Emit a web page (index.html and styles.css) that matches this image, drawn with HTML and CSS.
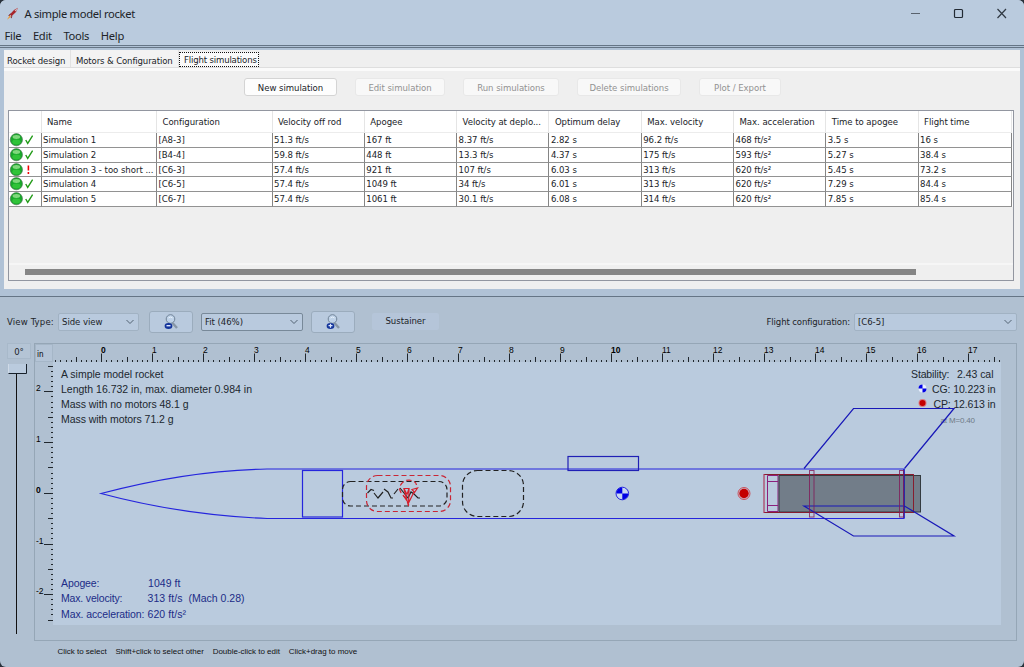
FILE: index.html
```
<!DOCTYPE html>
<html lang="en">
<head>
<meta charset="utf-8">
<title>A simple model rocket</title>
<link rel="stylesheet" href="styles.css">
</head>
<body>
<div class="window">
  <header class="titlebar">
    <svg class="app-icon" width="14" height="14" viewBox="0 0 14 14"><path d="M13 .8 9 3 4.800 7.500 6.500 9.300 11 5Z" fill="#a8262b"/><path d="M13 .8 9.500 3.500 11 4.500Z" fill="#d8b8bc"/><path d="M6 6 3.200 8.500 4.500 9.300ZM7.500 8.500 6.500 11.500 5.500 10Z" fill="#7b2230"/><path d="M4.800 8.200 2 12.800 6 9.800Z" fill="#ef9a32"/></svg>
    <span class="window-title">A simple model rocket</span>
    <svg class="window-buttons" width="104" height="14" viewBox="0 0 104 14"><path d="M1 6.500h9" stroke="#59626d"/><rect x="44.500" y="2.500" width="8" height="8" rx="1" fill="none" stroke="#222a33" stroke-width="1.200"/><path d="m87.500 2 8.500 9m0-9-8.500 9" stroke="#303943" stroke-width="1.200"/></svg>
  </header>
  <nav class="menubar"><span>File</span><span>Edit</span><span>Tools</span><span>Help</span></nav>
  <section class="upper">
    <div class="tabs"><span class="tab tab-design">Rocket design</span><span class="tab tab-motors">Motors &amp; Configuration</span><span class="tab tab-flight">Flight simulations</span></div>
    <div class="simulations">
      <div class="actions">
        <button class="btn new">New simulation</button><button class="btn edit" disabled>Edit simulation</button><button class="btn run" disabled>Run simulations</button><button class="btn delete" disabled>Delete simulations</button><button class="btn plot" disabled>Plot / Export</button>
      </div>
      <div class="table-pane">
        <div class="row head"><span></span><span>Name</span><span>Configuration</span><span>Velocity off rod</span><span>Apogee</span><span>Velocity at deplo...</span><span>Optimum delay</span><span>Max. velocity</span><span>Max. acceleration</span><span>Time to apogee</span><span>Flight time</span></div>
        <div id="rows"></div>
        <div class="filler"></div>
        <div class="scrollbar"><div class="thumb"></div></div>
      </div>
    </div>
  </section>
  <section class="lower">
    <div class="toolbar">
      <label class="view-label">View Type:</label>
      <div class="combo view">Side view<svg width="8" height="6"><path d="m.5 1 3.500 3.500L7.500 1"/></svg></div>
      <div class="zoom-btn"><svg width="16" height="16" viewBox="0 0 16 16"><path d="m9.500 9 4.500 5" stroke="#8796a6" stroke-width="2.400"/><circle cx="7.500" cy="5" r="4.300" fill="#bfd2e8" stroke="#718498"/><path d="M5.500 4q2-2 4 0" stroke="#e6f0fa" fill="none"/><ellipse cx="5.500" cy="12" rx="3.900" ry="3" fill="#13349b"/><path d="M3.500 11.700h4" stroke="#dce7ff" stroke-width="1.400"/></svg></div>
      <div class="combo scale">Fit (46%)<svg width="8" height="6"><path d="m.5 1 3.500 3.500L7.500 1"/></svg></div>
      <div class="zoom-btn"><svg width="16" height="16" viewBox="0 0 16 16"><path d="m9.500 9 4.500 5" stroke="#8796a6" stroke-width="2.400"/><circle cx="7.500" cy="5" r="4.300" fill="#bfd2e8" stroke="#718498"/><path d="M5.500 4q2-2 4 0" stroke="#e6f0fa" fill="none"/><ellipse cx="5.500" cy="12" rx="3.900" ry="3" fill="#13349b"/><path d="M3.500 11.700h4M5.500 9.800v4" stroke="#dce7ff" stroke-width="1.200"/></svg></div>
      <div class="stage">Sustainer</div>
      <label class="config-label">Flight configuration:</label>
      <div class="combo config">[C6-5]<svg width="8" height="6"><path d="m.5 1 3.500 3.500L7.500 1"/></svg></div>
    </div>
    <div class="workspace">
      <div class="rotation"><span class="angle">0°</span><svg width="22" height="275" viewBox="0 0 22 275"><path d="M9.500 10v261" stroke="#111" /><path d="M1.500 1v9h18V1" fill="#bacbde"/><path d="M1.500 10.500h18V1" fill="none" stroke="#17202a"/><path d="M1.500 10V1" stroke="#cfdae7"/></svg></div>
      <svg class="drawing" width="984" height="299" viewBox="34 343 984 299">
        <rect x="34.500" y="343.500" width="982" height="297" fill="#b0c0d1" stroke="#95a6b6"/>
        <rect x="35.500" y="344.500" width="17" height="17" fill="#b4c4d6" stroke="#a5b6c7"/>
        <rect x="53" y="362" width="948" height="263" fill="#bacbde"/>
        <text class="unit" x="37" y="356.500">in</text>
        <g id="ticks" stroke="#20272e"></g>
        <g id="numbers" class="numbers"></g>
        <g class="info">
          <text x="61" y="378" textLength="102.500">A simple model rocket</text>
          <text x="61" y="393" textLength="191">Length 16.732 in, max. diameter 0.984 in</text>
          <text x="61" y="408" textLength="127.500">Mass with no motors 48.1 g</text>
          <text x="61" y="423" textLength="112.500">Mass with motors 71.2 g</text>
          <text x="911" y="378" textLength="38.500">Stability:</text><text x="957" y="378" textLength="36.500">2.43 cal</text>
          <text x="932" y="393" textLength="63.500">CG: 10.223 in</text>
          <text x="933.500" y="407.500" textLength="62">CP: 12.613 in</text>
        </g>
        <text class="mach" x="940.500" y="423" textLength="34.500">at M=0.40</text>
        <g class="flight">
          <text x="61" y="587" textLength="38.500">Apogee:</text><text x="148" y="587" textLength="32.500">1049 ft</text>
          <text x="61" y="602" textLength="61.500">Max. velocity:</text><text x="147.500" y="602" textLength="35">313 ft/s</text><text x="188.500" y="602" textLength="56">(Mach 0.28)</text>
          <text x="61" y="617.500" textLength="83.500">Max. acceleration:</text><text x="147.500" y="617.500" textLength="38.500">620 ft/s²</text>
        </g>
        <circle cx="922.500" cy="388.500" r="3.900" fill="#e9f0ff"/><path d="M922.500 388.500v-4a4 4 0 0 0-4 4zm0 0h4a4 4 0 0 1-4 4z" fill="#0000e4"/>
        <circle cx="922.500" cy="403" r="4" fill="#dc7780"/><circle cx="922.500" cy="403" r="3" fill="#c40000"/>
        <g class="outline">
          <path d="M101 493.500C148 481 205 470 267 469H904V518.500H267C205 516 148 506 101 493.500Z"/>
          <rect x="302.500" y="470.500" width="40" height="46.500"/>
          <rect x="568" y="456.500" width="70.500" height="14" stroke="#2020b5"/>
        </g>
        <g class="hidden-parts">
          <rect x="342.500" y="481.500" width="104.500" height="24.500" rx="8" stroke="#222"/>
          <rect x="462.500" y="470.500" width="61" height="46" rx="15" stroke="#222"/>
          <rect x="366.500" y="475.500" width="84" height="36" rx="11" stroke="#c92635"/>
          <path class="solid" d="m367.500 493 3.500-3.500 3 1M374 493l4 5 5-6M384 489l4 3 3 6h2M394 494l4-5M400 488l8 10 3-6 3 2 4 4h2" stroke="#222"/>
          <path d="M406.500 499c-3-3-7-7-7-11 1-5 5-8 9.500-8q7 1 7.500 5" stroke="#d51f2c"/>
          <path class="solid" d="M404 488.500h5l-2 6zM412 489.500l5.500-1.500-3 4.500zM404 489l4.500 17 .5-17M414 492l-5.500 11-5.500-8" stroke="#d51f2c"/>
        </g>
        <g fill="none" stroke="#a52045"><rect x="764" y="474.500" width="149.500" height="38"/><path d="M767.500 475.500h10.500v36h-10.500zM767.500 481.500H778M767.500 505.500H778" stroke="#8c207c"/></g>
        <rect x="779" y="475.500" width="141.500" height="36.500" fill="#30363b" fill-opacity=".52" stroke="#343b40"/>
        <path d="M913.500 474.500v38M765 474.500H913M765 512.500H913" stroke="#861d2e" fill="none"/>
        <g class="fins"><path d="M804 468.500 853.500 408.500H954L904.500 468.500M804 506H904.500L954 536H853.500ZM904 469v49"/></g>
        <g fill="none" stroke="#821a59" opacity=".8"><rect x="809.500" y="470.500" width="4.500" height="46.500"/><rect x="899.500" y="470.500" width="4" height="46.500"/></g>
        <circle cx="622.300" cy="493.500" r="6.300" fill="#c8d8f0" stroke="#2525dd"/><path d="M622.300 493.500v-6a6 6 0 0 0-6 6zm0 0h6a6 6 0 0 1-6 6z" fill="#0000e4"/>
        <circle cx="744" cy="493.500" r="6" fill="#c8b2c4" stroke="#c7535e"/><circle cx="744" cy="493.500" r="4.700" fill="#c40000"/>
      </svg>
    </div>
    <footer class="hints"><span>Click to select</span><span>Shift+click to select other</span><span>Double-click to edit</span><span>Click+drag to move</span></footer>
  </section>
</div>
<script src="main.js"></script>
</body>
</html>
```
FILE: styles.css
```
* { box-sizing: border-box; }
body { margin: 0; background: #29313b; font: 9.5px "DejaVu Sans Condensed", "DejaVu Sans", sans-serif; letter-spacing: -.04px; color: #202328; }
.window { width: 1024px; height: 667px; display: flex; flex-direction: column; overflow: hidden; background: #b0c0d1; border-radius: 6px; }
.titlebar { height: 28px; display: flex; align-items: center; padding-left: 5px; background: #bacbde; font: 11.2px/26px "Noto Sans", sans-serif; }
.window-title { margin: -1px 0 0 5.500px; letter-spacing: -.3px; }
.window-buttons { margin-left: auto; margin-right: 10px; fill: none; }
.menubar { height: 17px; display: flex; padding-left: 4.500px; background: #bacbde; font: 11.2px/16px "Noto Sans", sans-serif; letter-spacing: -.28px; gap: 11.600px; }
.upper { height: 252px; padding: 2px 4px 7px; background: #b0c2d6; border-top: 3px double #657586; border-bottom: 1px solid #657586; display: flex; flex-direction: column; }
.tabs { height: 18px; display: flex; align-items: flex-start; background: #efefef; border-bottom: 1px solid #dedede; }
.tab { height: 17px; line-height: 21px; white-space: nowrap; background: #f3f3f3; border-right: 1px solid #e2e2e2; padding-left: 3px; letter-spacing: -.1px; }
.tab-design { width: 67px; }
.tab-motors { width: 108px; padding-left: 5px; letter-spacing: -.12px; }
.tab-flight { width: 80px; height: 15px; margin-top: 2px; line-height: 13px; padding-left: 4px; border: 1px dotted #111; background: #fafafa; letter-spacing: -.16px; }
.simulations { flex: 1; background: #efefef; border-top: 3px solid #fafafa; padding: 7px 6px 8px 4px; display: flex; flex-direction: column; }
.actions { display: flex; height: 18px; margin: 0 0 14px 236px; }
.btn { padding: 0; height: 18px; border: 1px solid #d4d4d4; border-radius: 3px; background: #fdfdfd; font: inherit; letter-spacing: -.04px; color: #202328; }
.btn:disabled { color: #929292; background: #f8f8f8; border-color: #e8e8e8; }
.new { width: 93px; } .edit { width: 90px; margin-left: 18px; } .run { width: 96px; margin-left: 18px; } .delete { width: 104px; margin-left: 18px; } .plot { width: 82px; margin-left: 18px; }
.table-pane { flex: 1; border: 1px solid #9296a0; display: flex; flex-direction: column; }
.row { display: grid; grid-template-columns: 32.500px 115.500px 115.500px 92.300px 92.300px 92.300px 92.300px 92.300px 92.300px 92.300px 93.700px; height: 14.75px; line-height: 14px; background: #fff; overflow: hidden; }
.row > span { border-right: 1px solid #858585; border-bottom: 1px solid #929292; padding-left: 1.500px; white-space: nowrap; overflow: hidden; }
.head { height: 22px; line-height: 22px; }
.head > span { border-right-color: #e5e5e5; border-bottom-color: #ececec; padding-left: 5.500px; }
.row > .status { padding: 0; display: flex; }
.filler { flex: 1; }
.scrollbar { height: 17px; border-top: 2px solid #f6f6f6; padding: 4px 0 0 16px; }
.thumb { width: 891px; height: 6px; background: #858585; }
.lower { flex: 1; display: flex; flex-direction: column; padding: 13px 7px 5px; min-height: 0; }
.toolbar { height: 24px; display: flex; align-items: center; }
.view-label { width: 51px; white-space: nowrap; letter-spacing: .15px; }
.combo { height: 18px; display: flex; align-items: center; justify-content: space-between; padding: 0 4px 0 3px; border: 1px solid #a1b2c3; background: #b9cade; white-space: nowrap; border-radius: 2px; }
.combo svg { fill: none; stroke: #536373; }
.view { width: 81px; margin-right: 10px; }
.scale { width: 102px; border-color: #788999; margin: 0 8px; }
.zoom-btn { width: 44px; height: 22px; display: grid; place-items: center; border: 1px solid #9bacbd; border-radius: 3px; background: #b9cade; }
.stage { width: 67px; height: 17px; margin-left: 17px; line-height: 16px; text-align: center; border-radius: 2px; background: #b5c5d9; }
.config-label { margin-left: auto; margin-right: 4px; letter-spacing: -.13px; }
.config { width: 163px; }
.workspace { height: 299px; margin-top: 10px; display: flex; }
.rotation { width: 27px; flex: none; }
.angle { display: block; width: 24px; height: 16px; border: 1px solid #a8b9ca; background: #b4c4d5; text-align: center; line-height: 15px; margin-bottom: 4px; }
.drawing { font-family: "Liberation Sans", sans-serif; letter-spacing: 0; flex: none; }
.unit { font: 8px "DejaVu Sans Condensed", sans-serif; }
.numbers { font-size: 8.500px; }
.bold { font-weight: bold; }
.info { font-size: 10.500px; fill: #20272e; }
.flight { font-size: 10.500px; fill: #202b87; }
.mach { font-size: 8px; fill: #6f7a85; }
.outline { fill: none; stroke: #2525dd; stroke-width: 1.200; }
.fins { fill: none; stroke: #1818b8; stroke-width: 1.200; }
.hidden-parts { fill: none; stroke-dasharray: 5 3; stroke-width: 1.200; }
.solid { stroke-dasharray: none; }
.hints { display: flex; gap: 8.800px; padding-left: 50.500px; font: 7.980px/20px "Liberation Sans", sans-serif; letter-spacing: 0; color: #111; }
```
FILE: main.js
```
const sims = [
  ["Simulation 1", "[A8-3]", "51.3 ft/s", "167 ft", "8.37 ft/s", "2.82 s", "96.2 ft/s", "468 ft/s²", "3.5 s", "16 s"],
  ["Simulation 2", "[B4-4]", "59.8 ft/s", "448 ft", "13.3 ft/s", "4.37 s", "175 ft/s", "593 ft/s²", "5.27 s", "38.4 s"],
  ["Simulation 3 - too short ...", "[C6-3]", "57.4 ft/s", "921 ft", "107 ft/s", "6.03 s", "313 ft/s", "620 ft/s²", "5.45 s", "73.2 s"],
  ["Simulation 4", "[C6-5]", "57.4 ft/s", "1049 ft", "34 ft/s", "6.01 s", "313 ft/s", "620 ft/s²", "7.29 s", "84.4 s"],
  ["Simulation 5", "[C6-7]", "57.4 ft/s", "1061 ft", "30.1 ft/s", "6.08 s", "314 ft/s", "620 ft/s²", "7.85 s", "85.4 s"]
];
document.getElementById("rows").innerHTML = sims.map((sim, i) => {
  const mark = i === 2
    ? '<path d="M19.700 2.500v5M19.700 9v2" stroke="#f00000" stroke-width="1.600"/>'
    : '<path d="m17 7 2 3.500L24 2.500" fill="none" stroke="#239b18" stroke-width="1.400"/>';
  const ball = '<circle cx="7.500" cy="6.700" r="6.200" fill="#19a82b" stroke="#416747" stroke-width=".6"/><ellipse cx="7.500" cy="4" rx="3.800" ry="2" fill="#7fd87c"/><ellipse cx="7.500" cy="9" rx="4.200" ry="2.500" fill="#30c338"/>';
  return '<div class="row"><span class="status"><svg width="32" height="14" viewBox="0 0 32 14">' + ball + mark + '</svg></span>' + sim.map(v => '<span>' + v + '</span>').join("") + '</div>';
}).join("");

let ticks = "", numbers = "";
for (let i = -9; i <= 176; i++) {
  const x = Math.round(101.2 + i * 5.1) + .5;
  const top = i % 10 === 0 ? 353.5 : i % 5 === 0 ? 357 : 360;
  ticks += `<path d="M${x} ${top}V362"/>`;
  if (i % 10 === 0) numbers += `<text x="${x - .5}" y="353" class="${i % 100 === 0 ? "bold" : ""}">${i / 10}</text>`;
}
for (let i = -25; i <= 25; i++) {
  const y = Math.round(492.8 - i * 5.07) + .5;
  const left = i % 10 === 0 ? 44 : i % 5 === 0 ? 48 : 51;
  ticks += `<path d="M${left} ${y}H53"/>`;
  if (i % 10 === 0) numbers += `<text x="36" y="${y - 1}" class="${i === 0 ? "bold" : ""}">${i / 10}</text>`;
}
document.getElementById("ticks").innerHTML = ticks;
document.getElementById("numbers").innerHTML = numbers;
```
